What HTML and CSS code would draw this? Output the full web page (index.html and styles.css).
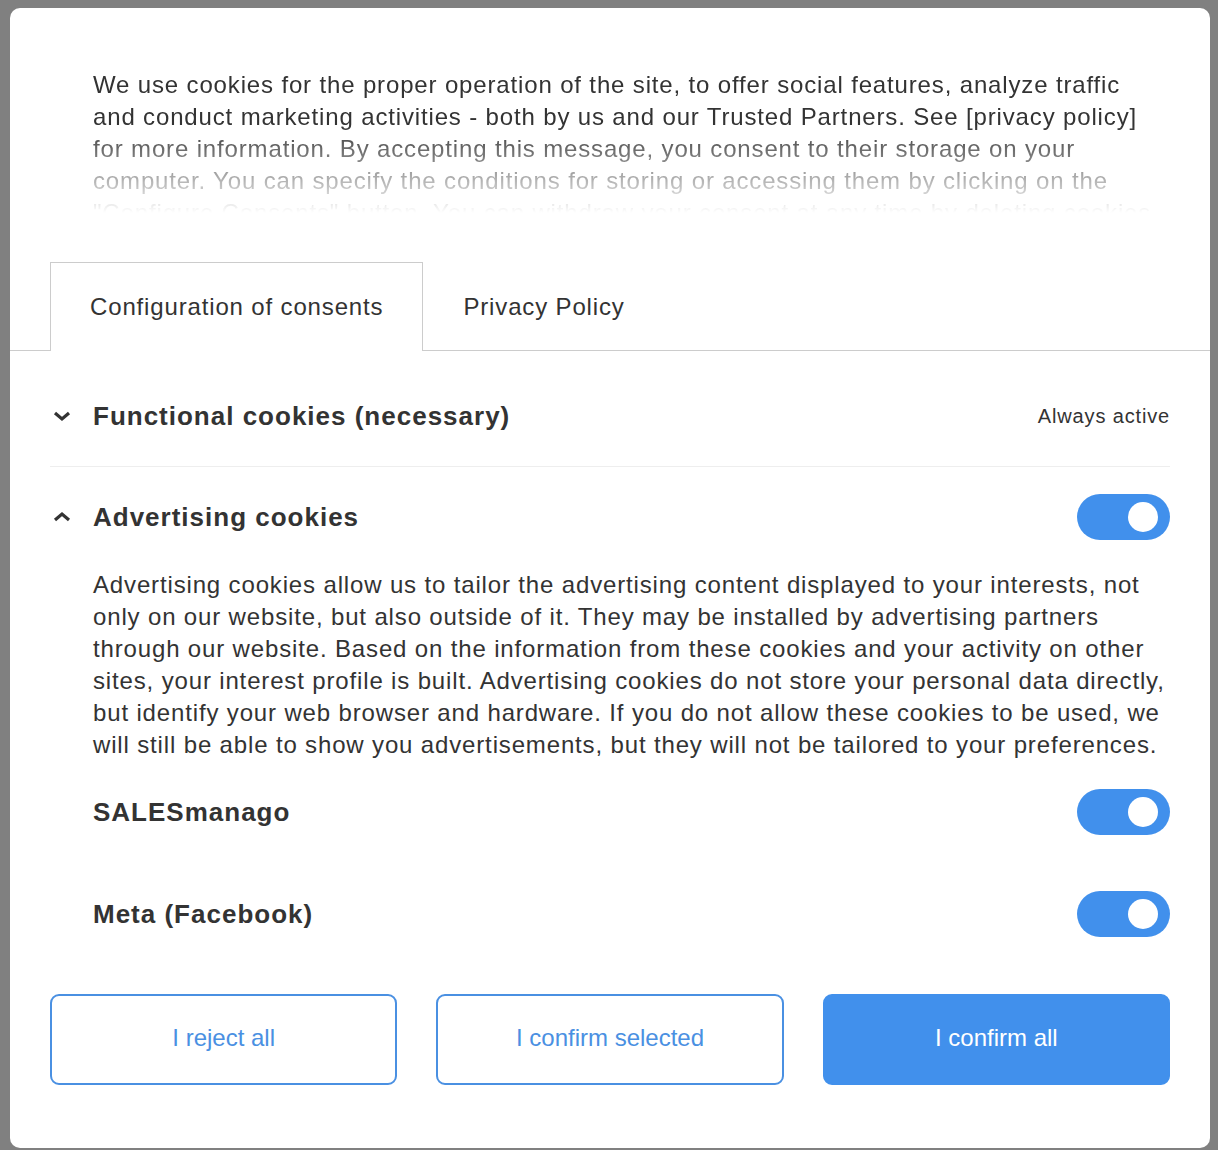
FILE: index.html
```html
<!DOCTYPE html>
<html>
	<head>
	<meta name="viewport" content="width=device-width, initial-scale=1.0"/>
	<link rel="stylesheet" href="styles.css">
	</head>
	<body>
		<div class="modal">
			<div class="intro">
				We use cookies for the proper operation of the site, to offer social features, analyze traffic and conduct marketing activities - both by us and our Trusted Partners. See [privacy policy] for more information. By accepting this message, you consent to their storage on your computer. You can specify the conditions for storing or accessing them by clicking on the "Configure Consents" button. You can withdraw your consent at any time by deleting cookies.
			</div>

			<div class="tabs">
				<div class="tab active">Configuration of consents</div>
				<div class="tab">Privacy Policy</div>
			</div>

			<div class="panel">
				<div class="cat cat-line">
					<div class="cat-head">
						<svg class="chev" width="20" height="12" viewBox="0 0 20 12"><polyline points="3,3 10,9 17,3" fill="none" stroke="#333" stroke-width="3.2"/></svg>
						<span class="cat-title">Functional cookies (necessary)</span>
						<span class="always">Always active</span>
					</div>
				</div>

				<div class="cat">
					<div class="cat-head">
						<svg class="chev" width="20" height="12" viewBox="0 0 20 12"><polyline points="3,9 10,3 17,9" fill="none" stroke="#333" stroke-width="3.2"/></svg>
						<span class="cat-title">Advertising cookies</span>
						<span class="toggle"><span class="knob"></span></span>
					</div>
					<p class="desc">Advertising cookies allow us to tailor the advertising content displayed to your interests, not only on our website, but also outside of it. They may be installed by advertising partners through our website. Based on the information from these cookies and your activity on other sites, your interest profile is built. Advertising cookies do not store your personal data directly, but identify your web browser and hardware. If you do not allow these cookies to be used, we will still be able to show you advertisements, but they will not be tailored to your preferences.</p>
					<div class="vendor">
						<span class="cat-title">SALESmanago</span>
						<span class="toggle"><span class="knob"></span></span>
					</div>
					<div class="vendor">
						<span class="cat-title">Meta (Facebook)</span>
						<span class="toggle"><span class="knob"></span></span>
					</div>
				</div>
			</div>

			<div class="actions">
				<button class="btn">I reject all</button>
				<button class="btn">I confirm selected</button>
				<button class="btn btn-fill">I confirm all</button>
			</div>
		</div>
	</body>
</html>
```

FILE: styles.css
```css
	body {
		margin: 0;
		padding: 8px 8px 2px 10px;
		background-color: #808080;
		font-family: "Liberation Sans", Arial, sans-serif;
		color: #333333;
		letter-spacing: 0.85px;
	}

	.modal {
		width: 1200px;
		height: 1140px;
		box-sizing: border-box;
		background-color: #ffffff;
		border-radius: 10px;
		padding-top: 61px;
	}

	.intro {
		margin: 0 44px 0 83px;
		height: 146px;
		overflow: hidden;
		font-size: 24px;
		line-height: 32px;
		-webkit-mask-image: linear-gradient(to bottom, #000 0, #000 56px, rgba(0,0,0,0) 144px);
		mask-image: linear-gradient(to bottom, #000 0, #000 56px, rgba(0,0,0,0) 144px);
	}

	.tabs {
		display: flex;
		align-items: flex-end;
		margin-top: 47px;
		padding-left: 40px;
		border-bottom: 1px solid #cccccc;
	}

	.tab {
		height: 89px;
		box-sizing: border-box;
		margin-bottom: -1px;
		padding: 0 39px;
		display: flex;
		align-items: center;
		font-size: 24px;
		color: #333333;
		border: 1px solid transparent;
		border-bottom: none;
	}

	.tab.active {
		border-color: #cccccc;
		background-color: #ffffff;
	}

	.panel {
		padding: 15px 40px 0 40px;
	}

	.cat-line {
		border-bottom: 1px solid #eeeeee;
	}

	.cat-head {
		height: 100px;
		display: flex;
		align-items: center;
	}

	.chev {
		width: 20px;
		margin: 0 21px 0 2px;
	}

	.cat-title {
		flex: 1;
		font-weight: bold;
		font-size: 26px;
		letter-spacing: 1px;
		color: #333333;
	}

	.always {
		font-size: 20px;
		color: #333333;
	}

	.toggle {
		width: 93px;
		height: 46px;
		border-radius: 23px;
		background-color: #4190ec;
		display: flex;
		align-items: center;
		justify-content: flex-end;
		padding-right: 12px;
		box-sizing: border-box;
	}

	.knob {
		width: 30px;
		height: 30px;
		border-radius: 50%;
		background-color: #ffffff;
	}

	.desc {
		margin: 2px 0 0 43px;
		font-size: 24px;
		line-height: 32px;
	}

	.vendor {
		height: 102px;
		display: flex;
		align-items: center;
		padding-left: 43px;
	}

	.actions {
		display: flex;
		gap: 39px;
		padding: 29px 40px 0 40px;
	}

	.btn {
		flex: 1;
		height: 91px;
		padding-bottom: 4px;
		border: 2px solid #4a90e2;
		border-radius: 9px;
		background-color: #ffffff;
		color: #4a90e2;
		font-family: "Liberation Sans", Arial, sans-serif;
		font-size: 24px;
		letter-spacing: 0;
	}

	.btn-fill {
		background-color: #4190ec;
		border-color: #4190ec;
		color: #ffffff;
	}
```
